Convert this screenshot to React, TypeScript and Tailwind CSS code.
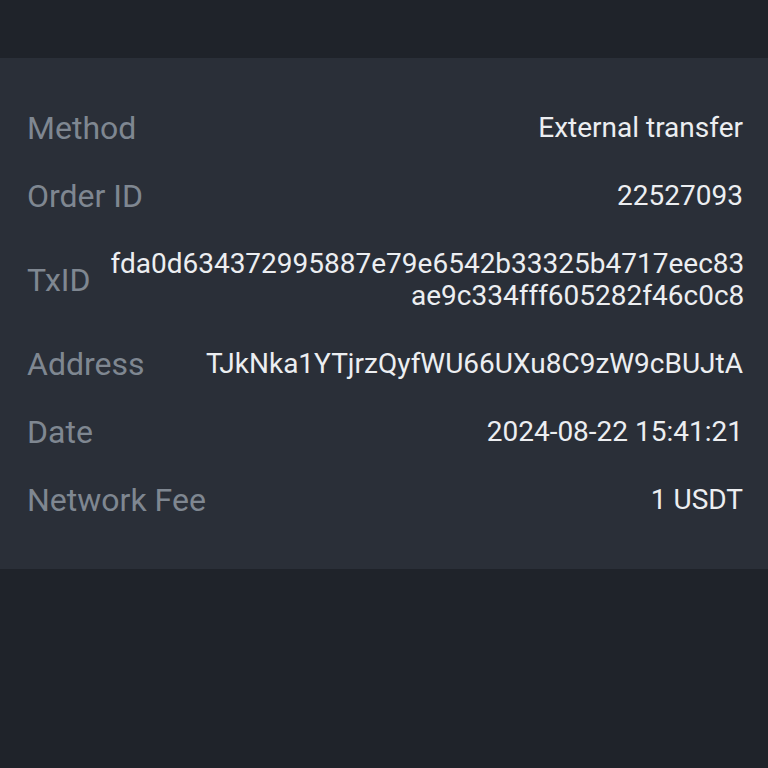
import React from 'react';

type Row = { label: string; value: React.ReactNode };

const rows: Row[] = [
  { label: 'Method', value: 'External transfer' },
  { label: 'Order ID', value: '22527093' },
  {
    label: 'TxID',
    value: (
      <>
        fda0d634372995887e79e6542b33325b4717eec83
        <br />
        ae9c334fff605282f46c0c8
      </>
    ),
  },
  { label: 'Address', value: 'TJkNka1YTjrzQyfWU66UXu8C9zW9cBUJtA' },
  { label: 'Date', value: '2024-08-22 15:41:21' },
  { label: 'Network Fee', value: '1 USDT' },
];

const App: React.FC = () => {
  return (
    <div
      className="min-h-screen w-full bg-[#1f232a] pt-[58px]"
      style={{ fontFamily: 'Roboto, "Noto Sans", sans-serif' }}
    >
      <div className="bg-[#2a2f38] pl-[27px] pr-[25px] pt-[54px] pb-[53px] flex flex-col gap-[36px]">
        {rows.map((row) => (
          <div key={row.label} className="flex items-center justify-between gap-5">
            <span className="shrink-0 text-[32px] leading-[32px] text-[#7f8791]">{row.label}</span>
            <span className="text-right text-[28px] leading-[32px] text-[#eceef1]">{row.value}</span>
          </div>
        ))}
      </div>
    </div>
  );
};

export default App;
